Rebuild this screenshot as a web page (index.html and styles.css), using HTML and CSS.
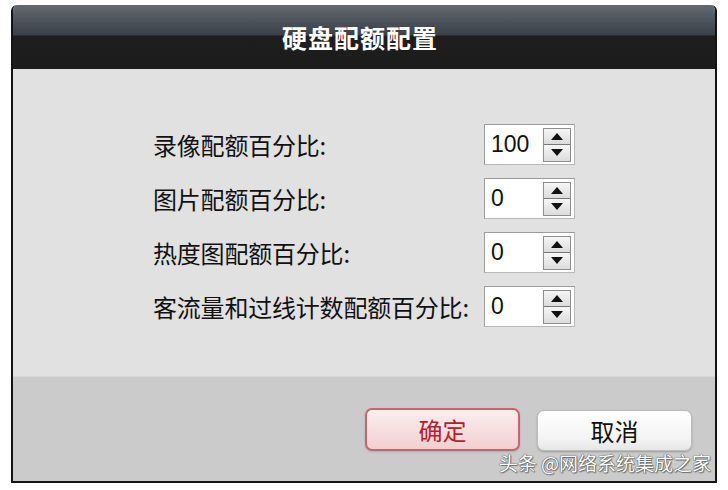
FILE: index.html
```html
<!DOCTYPE html>
<html lang="zh-CN">
<head>
<meta charset="utf-8">
<title>硬盘配额配置</title>
<link rel="stylesheet" href="styles.css">
</head>
<body>
<div class="dialog">
  <div class="header">硬盘配额配置</div>
  <div class="content">
    <div class="form">
      <div class="label">录像配额百分比:</div>
      <div class="spin"><span class="value">100</span><span class="btns"><span class="up"></span><span class="down"></span></span></div>
      <div class="label">图片配额百分比:</div>
      <div class="spin"><span class="value">0</span><span class="btns"><span class="up"></span><span class="down"></span></span></div>
      <div class="label">热度图配额百分比:</div>
      <div class="spin"><span class="value">0</span><span class="btns"><span class="up"></span><span class="down"></span></span></div>
      <div class="label">客流量和过线计数配额百分比:</div>
      <div class="spin"><span class="value">0</span><span class="btns"><span class="up"></span><span class="down"></span></span></div>
    </div>
  </div>
  <div class="footer">
    <button class="btn ok">确定</button>
    <button class="btn cancel">取消</button>
  </div>
  <div class="watermark">头条 @网络系统集成之家</div>
</div>
</body>
</html>
```
FILE: styles.css
```css
html, body {
  margin: 0;
  padding: 0;
  background: #ffffff;
}
body {
  font-family: "Noto Sans CJK SC", "Noto Sans", sans-serif;
  width: 728px;
  height: 490px;
  overflow: hidden;
}
.dialog {
  position: relative;
  margin: 5px 0 0 11px;
  width: 706px;
  box-sizing: border-box;
  border-left: 2px solid #141414;
  border-right: 2px solid #141414;
  border-bottom: 2px solid #141414;
  border-radius: 6px 6px 0 0;
  overflow: hidden;
}
.header {
  height: 64px;
  margin: 0 -2px;
  background: linear-gradient(#63696f 0, #4a5058 18px, #3a3f48 30px, #1e1e1e 31px, #1c1c1c 64px);
  color: #ffffff;
  font-weight: 700;
  font-size: 25px;
  line-height: 64px;
  text-align: center;
  letter-spacing: 1px;
  padding-right: 8px;
}
.content {
  background: #e1e1e1;
  height: 307px;
  box-sizing: border-box;
  padding: 55px 0 0 140px;
}
.form {
  display: grid;
  grid-template-columns: 331px 91px;
  grid-auto-rows: 41px;
  row-gap: 13px;
  align-items: center;
}
.label {
  font-size: 24px;
  color: #111111;
  line-height: 41px;
  white-space: nowrap;
  letter-spacing: -0.2px;
}
.spin {
  height: 41px;
  box-sizing: border-box;
  background: #ffffff;
  border: 1px solid #9c9c9c;
  border-bottom-color: #b8b8b8;
  border-right-color: #b8b8b8;
  display: flex;
  align-items: center;
  justify-content: space-between;
  padding: 0 3px 0 6px;
}
.value {
  font-family: "Liberation Sans", Arial, sans-serif;
  font-size: 23px;
  color: #111111;
}
.btns {
  width: 28px;
  height: 34px;
  box-sizing: border-box;
  border: 1px solid #8e8e8e;
  display: flex;
  flex-direction: column;
}
.up, .down {
  flex: 1;
  display: flex;
  align-items: center;
  justify-content: center;
  background: linear-gradient(#f6f6f6, #dcdcdc);
}
.up {
  border-bottom: 1px solid #777777;
}
.up::before {
  content: "";
  border-left: 6px solid transparent;
  border-right: 6px solid transparent;
  border-bottom: 7px solid #111111;
}
.down::before {
  content: "";
  border-left: 6px solid transparent;
  border-right: 6px solid transparent;
  border-top: 7px solid #111111;
}
.footer {
  background: #cbcbcb;
  height: 105px;
  box-sizing: border-box;
  border-top: 1px solid #d6d6d6;
  display: flex;
  justify-content: flex-end;
  align-items: flex-start;
  gap: 17px;
  padding: 31px 23px 0 0;
}
.btn {
  font-family: "Noto Sans CJK SC", sans-serif;
  font-size: 24px;
  width: 155px;
  height: 43px;
  border-radius: 7px;
  padding: 0;
  line-height: 40px;
}
.ok {
  color: #b3202e;
  border: 2px solid #c9646c;
  background: linear-gradient(#fbeeee, #f6dcdc 60%, #f1cfd0);
  box-shadow: 0 1px 2px rgba(0,0,0,0.15);
}
.cancel {
  margin-top: 2px;
  height: 41px;
  color: #111111;
  border: 1px solid #bdbdbd;
  background: linear-gradient(#ffffff, #f4f4f4 70%, #e6e6e6);
  box-shadow: 0 1px 2px rgba(0,0,0,0.25);
}
.watermark {
  position: absolute;
  right: 4px;
  bottom: 5px;
  font-size: 19px;
  color: #ffffff;
  white-space: nowrap;
  text-shadow: 0 0 1px #444, 0 0 1px #444, 1px 1px 1px rgba(0,0,0,0.4);
}
```
